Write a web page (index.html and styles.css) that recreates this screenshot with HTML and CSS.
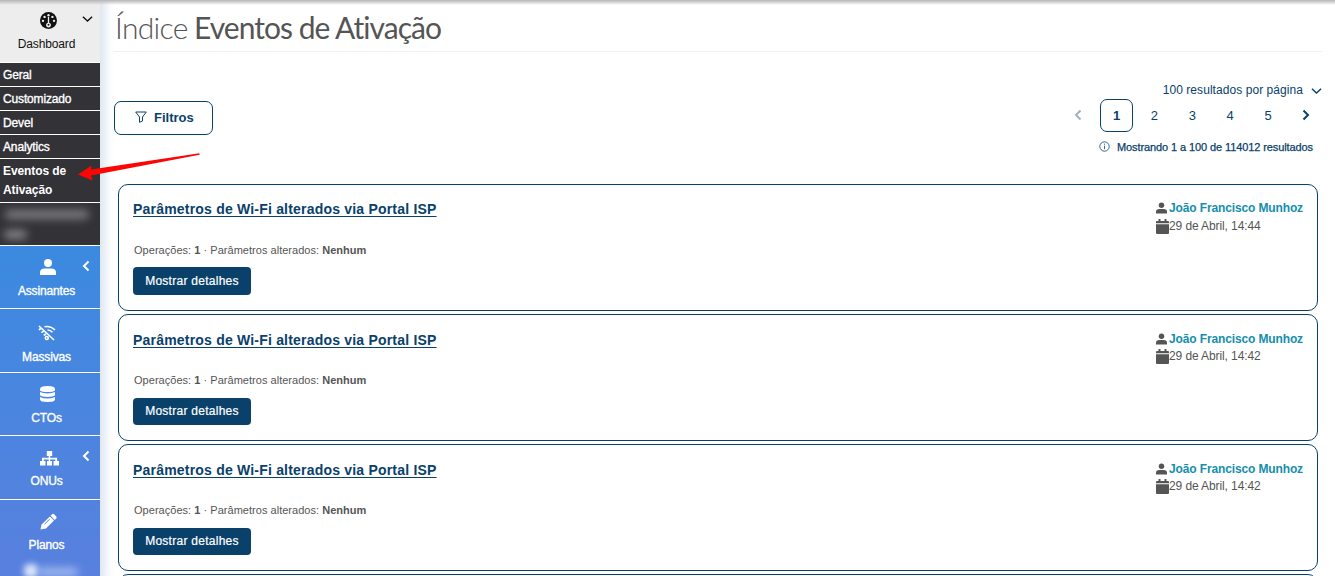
FILE: index.html
```html
<!DOCTYPE html>
<html lang="pt-BR">
<head>
<meta charset="utf-8">
<title>Eventos de Ativação</title>
<link rel="stylesheet" href="styles.css">
</head>
<body>
<svg class="defs" width="0" height="0">
  <symbol id="user" viewBox="0 0 16 16"><circle cx="8" cy="4" r="4"/><path d="M0 16v-2.500Q0 9.500 5 9.500h6q5 0 5 4V16z"/></symbol>
  <symbol id="calendar" viewBox="0 0 13 15"><path d="M2.500 0h2v2h4V0h2v2H12q1 0 1 1v1.300H0V3q0-1 1-1h1.500zM0 5.300h13V14q0 1-1 1H1q-1 0-1-1z"/></symbol>
  <symbol id="left" viewBox="0 0 8 12"><path d="M6.500 1.500 2 6l4.500 4.500" fill="none" stroke="currentColor" stroke-width="2"/></symbol>
  <symbol id="down" viewBox="0 0 12 8"><path d="M1 1.500 6 6.300l5-4.800" fill="none" stroke="currentColor" stroke-width="1.500"/></symbol>
</svg>
<div class="app">
  <nav class="sidebar">
    <a class="item dash">
      <svg class="gauge" viewBox="0 0 16 16"><circle cx="8" cy="8" r="8"/><g fill="#ededed"><circle cx="8" cy="3" r="1.100"/><circle cx="4.300" cy="4.600" r="1.100"/><circle cx="11.700" cy="4.600" r="1.100"/><circle cx="2.800" cy="8.300" r="1.100"/><circle cx="13.200" cy="8.300" r="1.100"/><path d="M7.400 4.500h1.200V10a2.300 2.300 0 1 1-1.200 0z"/></g><circle cx="8" cy="12" r=".9"/></svg>
      <svg class="chev-d"><use href="#down"/></svg>
      <span>Dashboard</span>
    </a>
    <a class="sub">Geral</a>
    <a class="sub">Customizado</a>
    <a class="sub">Devel</a>
    <a class="sub">Analytics</a>
    <a class="sub active">Eventos de<br>Ativação</a>
    <a class="sub hidden-item"><i class="smudge s1"></i><i class="smudge s2"></i></a>
    <a class="item assinantes"><svg class="ic-user"><use href="#user"/></svg><svg class="chev-l"><use href="#left"/></svg><span>Assinantes</span></a>
    <a class="item massivas"><svg class="ic-wifi outline" viewBox="0 0 18 16" stroke-width="1.600"><path d="M1 1l15 14M6.500 1.700Q12.500.5 17 5M9.500 5q3 .2 5 2.300M1 5q1-1 2.200-1.700M3.500 7.700q1-1 2.300-1.600M5.800 10.300q1-.9 2.300-1.200"/><circle cx="8.800" cy="13" r="1.500"/></svg><span>Massivas</span></a>
    <a class="item ctos"><svg class="ic-db" viewBox="0 0 15 16"><path d="M0 3Q0 0 7.500 0T15 3v1.500Q13 6 7.500 6T0 4.500zM0 6q3 1.400 7.500 1.400T15 6v3.300Q13 11 7.500 11T0 9.300zM0 10.900q3 1.500 7.500 1.500t7.500-1.500V13.500Q15 16 7.500 16T0 13.500z"/></svg><span>CTOs</span></a>
    <a class="item onus"><svg class="ic-tree" viewBox="0 0 19 15"><path d="M6.800 0h5.400v5H10.200v1.700h6.900V10H19v4.500h-5.500V10h1.800V8.500h-5.100V10H12v4.500H7V10h1.700V8.500H3.700V10h1.800v4.500H0V10h2V6.700h6.700V5H6.800z"/></svg><svg class="chev-l"><use href="#left"/></svg><span>ONUs</span></a>
    <a class="item planos"><svg class="ic-pen" viewBox="0 0 17 17"><path d="M11.800 1.500q1.300-1.300 2.500 0L16 3.200q1.200 1.200 0 2.500l-1.300 1.200-4.100-4.100zM9.900 3.500l4.100 4.100-8 8L.5 16.600l1-5z"/><path d="M4.500 11.200 9.800 6" stroke="#5581dd"/></svg><span>Planos</span><i class="smudge s3"></i><i class="smudge s4"></i></a>
  </nav>
  <main class="content">
    <h1>Índice <b>Eventos de Ativação</b></h1>
    <div class="toolbar">
      <button class="filter"><svg class="outline" viewBox="0 0 12 12"><path d="M.7 1h10.600L7.500 6v4L4.500 11.300V6z"/></svg><span>Filtros</span></button>
      <div class="paging">
        <div class="per-page"><span>100 resultados por página</span><svg><use href="#down"/></svg></div>
        <div class="pages"><svg class="prev"><use href="#left"/></svg><b>1</b><span>2</span><span>3</span><span>4</span><span>5</span><svg class="next"><use href="#left"/></svg></div>
        <div class="summary"><svg class="outline" viewBox="0 0 11 11" stroke-width=".8"><circle cx="5.500" cy="5.500" r="4.700"/><path d="M5.500 4.700v3.500M5.500 2.700v1"/></svg><span>Mostrando 1 a 100 de 114012 resultados</span></div>
      </div>
    </div>
    <section class="list">
      <article class="card">
        <div class="info"><h2>Parâmetros de Wi-Fi alterados via Portal ISP</h2><p>Operações: <b>1</b> · Parâmetros alterados: <b>Nenhum</b></p><button class="details">Mostrar detalhes</button></div>
        <div class="meta"><div class="who"><svg><use href="#user"/></svg><b>João Francisco Munhoz</b></div><div class="when"><svg><use href="#calendar"/></svg><span>29 de Abril, 14:44</span></div></div>
      </article>
      <article class="card tight">
        <div class="info"><h2>Parâmetros de Wi-Fi alterados via Portal ISP</h2><p>Operações: <b>1</b> · Parâmetros alterados: <b>Nenhum</b></p><button class="details">Mostrar detalhes</button></div>
        <div class="meta"><div class="who"><svg><use href="#user"/></svg><b>João Francisco Munhoz</b></div><div class="when"><svg><use href="#calendar"/></svg><span>29 de Abril, 14:42</span></div></div>
      </article>
      <article class="card tight">
        <div class="info"><h2>Parâmetros de Wi-Fi alterados via Portal ISP</h2><p>Operações: <b>1</b> · Parâmetros alterados: <b>Nenhum</b></p><button class="details">Mostrar detalhes</button></div>
        <div class="meta"><div class="who"><svg><use href="#user"/></svg><b>João Francisco Munhoz</b></div><div class="when"><svg><use href="#calendar"/></svg><span>29 de Abril, 14:42</span></div></div>
      </article>
      <article class="card"></article>
    </section>
  </main>
  <div class="top-shadow"></div>
  <svg class="arrow" viewBox="0 0 126 32"><path d="M122.500 1.300 14 17.500 14.500 13.500 1 22.500l14.500 6-1.500-5L122.500 2.800z" fill="#fb0505"/></svg>
</div>
</body>
</html>
```
FILE: styles.css
```css
* { box-sizing: border-box; }
body { margin: 0; background: #fff; font-family: "Liberation Sans", Arial, sans-serif; font-size: 12px; }
svg { display: block; fill: currentColor; flex: none; }
.outline { fill: none; stroke: currentColor; }
.defs { position: absolute; }
h1, h2, p { margin: 0; }
button { font-family: inherit; margin: 0; padding: 0; }
.app { position: relative; display: flex; width: 1335px; height: 576px; overflow: hidden; }
.sidebar { width: 100px; height: 576px; flex: none; overflow: hidden; color: #fff; background: linear-gradient(#3b8ae0 246px, #5980de 576px); }
.item { position: relative; display: flex; flex-direction: column; align-items: center; border-bottom: 1px solid #fff; -webkit-text-stroke: .35px; }
.item span { line-height: 14px; margin-right: 7px; letter-spacing: -.15px; margin-top: auto; }
.dash { height: 63px; padding: 12px 0 11px; color: #111; background: #ededed; -webkit-text-stroke: 0; }
.gauge { width: 17px; height: 17px; margin-right: 3px; }
.chev-d { position: absolute; left: 82px; top: 15px; width: 11px; height: 8px; }
.chev-l { position: absolute; left: 82px; top: 14px; width: 8px; height: 12px; }
.sub { display: block; height: 24px; padding: 3px 3px 0; line-height: 19px; background: #333237; border-bottom: 1px solid #fff; letter-spacing: -.15px; -webkit-text-stroke: .35px; }
.active { height: 44px; font-weight: bold; letter-spacing: -.1px; -webkit-text-stroke: 0; }
.hidden-item { height: 43px; position: relative; }
.smudge { position: absolute; border-radius: 5px; filter: blur(4px); }
.s1 { left: 5px; top: 7px; width: 84px; height: 9px; background: #7c7b80; }
.s2 { left: 4px; top: 27px; width: 23px; height: 9px; background: #858489; }
.s3 { left: 24px; top: 64px; width: 14px; height: 14px; background: #dce6fa; filter: blur(3px); }
.s4 { left: 38px; top: 68px; width: 40px; height: 8px; background: #a5bdf0; }
.assinantes { height: 63px; padding: 13px 0 10px; }
.ic-user { width: 16px; height: 16px; margin-right: 5px; }
.massivas { height: 64px; padding: 16px 0 8px; }
.ic-wifi { width: 18px; height: 16px; margin-right: 6px; }
.ctos { height: 63px; padding: 13px 0 10px; }
.ic-db { width: 15px; height: 16px; margin-right: 5px; }
.onus { height: 64px; padding: 15px 0 11px; }
.ic-tree { width: 19px; height: 15px; margin-right: 1px; }
.planos { height: 77px; border: 0; padding: 13px 0 25px; }
.ic-pen { width: 17px; height: 17px; margin-right: 3px; }
.content { flex: 1; padding: 0 13px 0 14px; box-shadow: inset 14px 0 12px -10px #d6e0ec; }
h1 { height: 52px; padding: 9px 0 0 1px; border-bottom: 1px solid #f1f1f1; font: 300 30px/36px Lato, sans-serif; color: #555; letter-spacing: -.7px; }
h1 b { font-weight: 400; letter-spacing: -.97px; margin-left: -1px; }
.toolbar { height: 132px; display: flex; justify-content: space-between; }
.filter { width: 99px; height: 34px; margin-top: 49px; display: flex; align-items: center; gap: 7px; padding: 0 0 2px 20px; border: 1px solid #09416b; border-radius: 7px; background: #fff; color: #09416b; font-size: 13px; font-weight: bold; letter-spacing: 0; }
.filter svg { width: 12px; height: 12px; }
.filter span { padding-top: 1px; }
.paging { color: #09416b; width: 248px; padding-top: 30px; }
.per-page { display: flex; justify-content: flex-end; align-items: center; gap: 8px; height: 16px; letter-spacing: .06px; }
.per-page svg { width: 11px; height: 8px; margin-top: 2px; }
.pages { height: 34px; display: flex; align-items: center; font-size: 13px; }
.pages b { width: 33px; height: 33px; border: 1px solid #09416b; border-radius: 7px; line-height: 31px; text-align: center; margin: 1px 2.500px 0 18px; }
.pages span { width: 37.900px; text-align: center; }
.prev, .next { width: 8px; height: 12px; }
.prev { opacity: .4; }
.next { transform: scaleX(-1); margin-left: 15px; }
.summary { display: flex; align-items: center; gap: 7px; padding-left: 25px; height: 29px; font-size: 11px; letter-spacing: -.1px; white-space: nowrap; -webkit-text-stroke: .25px; }
.summary svg { width: 11px; height: 11px; }
.list { padding: 0 4px; display: flex; flex-direction: column; gap: 3px; }
.card { display: flex; justify-content: space-between; flex: none; height: 127px; border: 1px solid #09416b; border-radius: 10px; padding: 16px 14px 0; color: #555; }
.card h2 { color: #09416b; font-size: 14px; line-height: 17px; text-decoration: underline; text-underline-offset: 2px; letter-spacing: .2px; }
.card p { font-size: 11px; line-height: 14px; margin: 25px 0 0 1px; letter-spacing: .03px; }
.details { width: 118px; height: 28px; margin-top: 10px; padding-bottom: 1px; border: 0; border-radius: 4px; background: #09416b; color: #fff; font-size: 12px; letter-spacing: .27px; -webkit-text-stroke: .2px; }
.tight { padding-top: 17px; }
.tight p { margin-top: 24px; }
.tight .details { height: 27px; margin-top: 11px; }
.meta { width: 147px; }
.who, .when { display: flex; align-items: center; height: 18px; white-space: nowrap; }
.tight .when { height: 16px; }
.who { margin-top: -2px; gap: 2px; }
.who svg { width: 11px; height: 12px; }
.who b { color: #168eae; letter-spacing: -.13px; }
.when svg { width: 13px; height: 15px; }
.when span { letter-spacing: -.1px; }
.top-shadow { position: absolute; left: 0; right: 0; top: 0; height: 5px; background: linear-gradient(#b5b5b5, rgba(220,220,220,0)); }
.arrow { position: absolute; left: 77px; top: 152px; width: 126px; height: 32px; }
```
